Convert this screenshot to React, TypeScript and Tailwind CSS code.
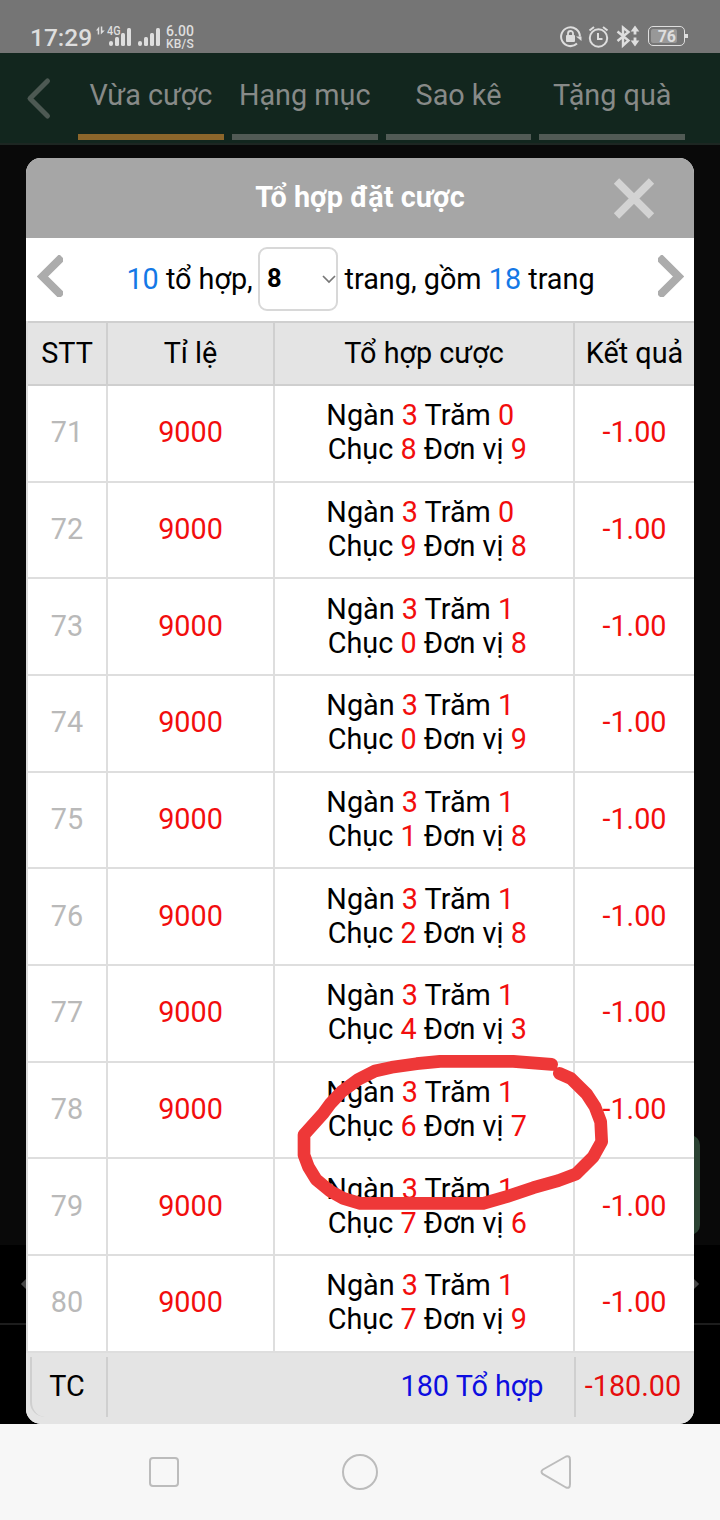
import clsx from "clsx";

type Bet = {
  id: number;
  digits: [number, number, number, number];
};

const TABS = ["Vừa cược", "Hạng mục", "Sao kê", "Tặng quà"];

const BETS: Bet[] = [
  { id: 71, digits: [3, 0, 8, 9] },
  { id: 72, digits: [3, 0, 9, 8] },
  { id: 73, digits: [3, 1, 0, 8] },
  { id: 74, digits: [3, 1, 0, 9] },
  { id: 75, digits: [3, 1, 1, 8] },
  { id: 76, digits: [3, 1, 2, 8] },
  { id: 77, digits: [3, 1, 4, 3] },
  { id: 78, digits: [3, 1, 6, 7] },
  { id: 79, digits: [3, 1, 7, 6] },
  { id: 80, digits: [3, 1, 7, 9] },
];

const StatusBar = () => (
  <div className="flex h-[53px] shrink-0 items-start justify-between bg-[#757575] pl-[30px] pr-8 text-[#dedede]">
    <div className="flex">
      <span className="mt-[24px] w-[66px] text-[24.5px] leading-7 font-medium">17:29</span>
      <svg className="mt-[25px]" width="66" height="24" fill="currentColor">
        <path d="M0 5.5 3.2 1.5V9.5H1.7V5.5zM4.8 1.5h1.5V5.5H8.8L4.8 9.5z" />
        <text x="11" y="10" fontSize="12" fontWeight="500" textLength="13.5" lengthAdjust="spacingAndGlyphs">4G</text>
        <rect x="13" y="16" width="4" height="5" rx="2" />
        <rect x="19" y="12" width="4" height="9" rx="1.5" />
        <rect x="25" y="8" width="4" height="13" rx="1.5" />
        <rect x="31" y="3" width="4" height="18" rx="1.5" />
        <rect x="42" y="16" width="4" height="5" rx="2" />
        <rect x="48" y="12" width="4" height="9" rx="1.5" />
        <rect x="54" y="8" width="4" height="13" rx="1.5" />
        <rect x="60" y="3" width="4" height="18" rx="1.5" />
      </svg>
      <div className="mt-[25px] ml-1 font-medium">
        <p className="text-[14px] leading-[13px] tracking-[0.1px]">6.00</p>
        <p className="text-[12px] leading-[12px] tracking-[0.2px]">KB/S</p>
      </div>
    </div>
    <div className="mt-[25px] flex items-start">
      <svg width="81" height="24" fill="none" stroke="currentColor" strokeWidth="2">
        {/* rotation lock */}
        <path d="M17 18.5A9.4 9.4 0 1 1 19.9 11.5" />
        <path d="M16 11.5h5.5v4.5z" fill="currentColor" stroke="none" />
        <rect x="6" y="10" width="9" height="7" rx="1" fill="currentColor" stroke="none" />
        <path d="M8 10.5V8.5a2.5 2.5 0 0 1 5 0v2" strokeWidth="1.8" />
        {/* alarm */}
        <circle cx="38.5" cy="13" r="8.7" />
        <path d="M38 8v6h4.5M29.5 5.5l4.5-3.5M43 2l4.5 3.5" />
        {/* bluetooth */}
        <path d="m57.5 6.5 11 9-5.5 5V2.5l5.5 4.5-11 9" strokeWidth="2.4" />
        <path d="M75 5v4.5M75 12.5V17" strokeWidth="2.8" />
        <path d="m70.7 6.5 4.3-6 4.3 6zM70.7 15.5l4.3 6 4.3-6z" fill="currentColor" stroke="none" />
      </svg>
      <div className="ml-[7px] flex items-center">
        <div className="mt-[1px] flex h-5 w-[37px] items-center rounded-[5px] border border-current p-[2px]">
          <div className="h-full w-[26px] rounded-[2px] bg-[#989898] pr-[1px] text-right text-[16px] leading-[16px] font-bold">76</div>
        </div>
        <div className="h-1 w-[3px] bg-current" />
      </div>
    </div>
  </div>
);

const Nav = () => (
  <div className="flex h-[92px] shrink-0 border-b-2 border-[#1d2622] bg-[#12261e]">
    <div className="w-[78px] shrink-0">
      <svg className="mt-[24px] ml-[26px]" width="26" height="44" fill="none" stroke="#4d5953" strokeWidth="5" strokeLinecap="round" strokeLinejoin="round">
        <path d="M21.5 4 4 21.5 21.5 39" />
      </svg>
    </div>
    <div className="flex gap-2">
      {TABS.map((tab, i) => (
        <div
          key={tab}
          className={clsx(
            "mb-[3px] w-[145.8px] border-b-6 pt-[25px] text-center text-[28.8px] leading-[34px] whitespace-nowrap text-[#878a88]",
            i === 0 ? "border-[#8c662b]" : "border-[#515a55]"
          )}
        >
          {tab}
        </div>
      ))}
    </div>
  </div>
);

const Pager = () => (
  <div className="flex h-[83px] items-center justify-between bg-white pr-[10px] pl-[11px]">
    <svg className="-mt-[7px]" width="26" height="42" fill="none" stroke="#acacac" strokeWidth="8">
      <path d="M25 2 5.5 21.5 25 41" />
    </svg>
    <div className="flex items-center pb-[2px] whitespace-pre">
      <span><span className="text-[#1478e6]">10</span> tổ hợp, </span>
      <div className="-mr-[1px] -ml-[1.5px] flex h-16 w-20 items-center justify-between rounded-[9px] border-2 border-[#d8d8d8] pb-[2px] pl-[6.5px] text-[25.5px] font-bold">
        8
        <svg className="mt-[3px]" width="14" height="10" fill="none" stroke="#777" strokeWidth="1.7">
          <path d="m1 2 6 6 6-6" />
        </svg>
      </div>
      <span> trang, gồm <span className="text-[#1478e6]">18</span> trang</span>
    </div>
    <svg className="-mt-[7px]" width="26" height="42" fill="none" stroke="#acacac" strokeWidth="8">
      <path d="M1 2 20.5 21.5 1 41" />
    </svg>
  </div>
);

const Num = ({ value }: { value: number }) => <span className="text-[#f20d0d]">{value}</span>;

const BetRow = ({ bet }: { bet: Bet }) => {
  const [a, b, c, d] = bet.digits;

  return (
    <div className="grid h-[96.67px] grid-cols-[80px_167px_300px_119px] border-b-2 border-[#dedede] text-center">
      <div className="flex items-center justify-center border-r-2 border-[#dedede] pb-[2px] text-[#b9b9b9]">{bet.id}</div>
      <div className="flex items-center justify-center border-r-2 border-[#dedede] pb-[2px] text-[#f20d0d]">9000</div>
      <div className="border-r-2 border-[#dedede] pt-[12.3px] pl-[6.5px]">
        <p className="pr-[14px]">Ngàn <Num value={a} /> Trăm <Num value={b} /></p>
        <p>Chục <Num value={c} /> Đơn vị <Num value={d} /></p>
      </div>
      <div className="flex items-center justify-center pb-[2px] text-[#f20d0d]">-1.00</div>
    </div>
  );
};

const Modal = () => (
  <div className="relative mx-[26px] mt-[13px] flex h-[1266px] flex-col overflow-hidden rounded-[15px] bg-white">
    <div className="relative flex h-20 shrink-0 items-center justify-center bg-[#a6a6a6] pb-[2px] font-bold text-white">
      Tổ hợp đặt cược
      <svg className="absolute top-5 right-[39px]" width="42" height="42" stroke="#d3d3d3" strokeWidth="7.5">
        <path d="m3.5 3 35 35M38.5 3l-35 35" />
      </svg>
    </div>
    <Pager />
    <div className="border-l-2 border-[#dedede]">
      <div className="grid h-[65px] grid-cols-[80px_167px_300px_119px] border-y-2 border-[#cfcfcf] bg-[#e4e4e4] text-center leading-[60px] whitespace-nowrap">
        <div className="border-r-2 border-[#cfcfcf]">STT</div>
        <div className="border-r-2 border-[#cfcfcf]">Tỉ lệ</div>
        <div className="border-r-2 border-[#cfcfcf]">Tổ hợp cược</div>
        <div>Kết quả</div>
      </div>
      {BETS.map((bet) => (
        <BetRow key={bet.id} bet={bet} />
      ))}
    </div>
    <div className="flex-1 bg-[#e4e4e4] pt-1 pl-1">
      <div className="grid h-[60px] grid-cols-[78px_468px_118px] leading-[58px]">
        <div className="rounded-bl-[15px] border-r-2 border-l-2 border-[#cfcfcf] pr-1 text-center">TC</div>
        <div className="border-r-2 border-[#cfcfcf] pr-[30.5px] text-right text-[#0d0de0]">180 Tổ hợp</div>
        <div className="pr-1 text-center text-[#e60d0d]">-180.00</div>
      </div>
    </div>
  </div>
);

// hand-drawn circle around the marked combination
const Scribble = () => (
  <svg className="absolute top-[1040px] left-[280px]" width="340" height="190" viewBox="0 0 1020 570" fill="none" stroke="#ee3838" strokeWidth="38" strokeLinecap="round" strokeLinejoin="round">
    <path d="M815 73 700 64H480L410 71 335 82 285 93 235 118 185 155 152 190 130 220 72 284V345L85 380 108 418 150 453 190 475 240 490H610L680 470 760 443 835 422 888 402 940 350 965 305 962 245 945 200 920 162 872 115 838 100" />
  </svg>
);

const SystemNav = () => (
  <div className="flex h-24 shrink-0 items-center justify-between bg-[#f7f7f7] px-[148px]">
    <div className="ml-[1px] h-[30px] w-[30px] rounded-[4px] border-2 border-[#bcbcbc]" />
    <div className="h-9 w-9 rounded-full border-2 border-[#bcbcbc]" />
    <svg width="32" height="36" fill="none" stroke="#bcbcbc" strokeWidth="2" strokeLinejoin="round">
      <path d="M26 2.5 3 15.5Q0 17.5 3 20.2L26 33.5Q30 35 30 30V6Q30 1 26 2.5Z" />
    </svg>
  </div>
);

const App = () => (
  <div className="relative flex h-[1520px] w-[720px] flex-col overflow-hidden bg-black font-[Roboto,sans-serif] text-[28.8px] leading-[34px] text-black">
    <StatusBar />
    <Nav />
    <div className="relative h-[1279px] shrink-0">
      <div className="absolute inset-x-0 top-0 h-[1100px] bg-[#090909]" />
      <div className="absolute top-[990px] right-5 h-[100px] w-10 rounded-[10px] bg-[#2a4232]" />
      <div className="absolute inset-x-0 top-[1178px] h-[2px] bg-[#1d1d1d]" />
      <div className="absolute top-[1134px] left-[23px] h-2.5 w-2.5 rotate-45 bg-[#474747]" />
      <div className="absolute top-[1134px] right-[23px] h-2.5 w-2.5 rotate-45 bg-[#474747]" />
      <Modal />
    </div>
    <SystemNav />
    <Scribble />
  </div>
);

export default App;
